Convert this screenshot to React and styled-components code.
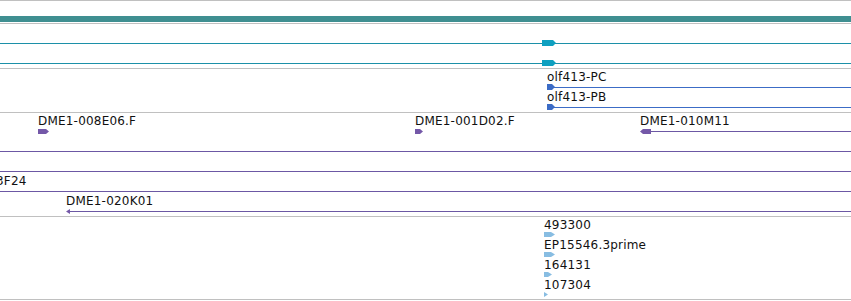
import React from "react";
import { styled, createGlobalStyle } from "styled-components";

const GlobalStyle = createGlobalStyle`
  body {
    margin: 0;
    background: #fff;
    font-family: "DejaVu Sans", "Liberation Sans", sans-serif;
    overflow: hidden;
  }
`;

const Browser = styled.div`
  display: flex;
  flex-direction: column;
  width: 851px;
  border-top: 1px solid #c0c0c0;
  overflow: hidden;
`;

const Track = styled.div`
  display: flex;
  flex-direction: column;
  padding: ${(p) => p.$pad || "0 0 3px"};
  border-bottom: 1px solid #c0c0c0;
`;

const Bar = styled.div`
  height: 6px;
  background: #3f8f91;
`;

const Row = styled.div`
  position: relative;
  height: 20px;
`;

// connector line of a feature, runs to the right edge of the view
const Span = styled.div`
  position: absolute;
  top: 18px;
  right: 0;
  height: 1px;
  background: ${(p) => p.$color};
`;

// a feature sits at its genomic x, label stacked over its glyph
const Feature = styled.div`
  position: absolute;
  top: 0;
  display: flex;
  flex-direction: column;
  align-items: flex-start;
  gap: ${(p) => p.$gap ?? 1}px;
  padding-top: ${(p) => p.$pt || 0}px;
`;

const Label = styled.span`
  font-size: 12px;
  line-height: 14px;
  letter-spacing: 0.2px;
  color: #111;
  white-space: nowrap;
`;

const Svg = styled.svg`
  display: block;
`;

// arrow glyph: a box with a pointed end, facing right or left
function Glyph({ w, h = 6, tip = 3, left, color }) {
  const pts = left
    ? `0,${h / 2} ${tip},0 ${w},0 ${w},${h} ${tip},${h}`
    : `0,0 ${w - tip},0 ${w},${h / 2} ${w - tip},${h} 0,${h}`;
  return (
    <Svg width={w} height={h} viewBox={`0 0 ${w} ${h}`}>
      <polygon points={pts} fill={color} />
    </Svg>
  );
}

const TEAL = "#1c90a8";
const TEAL_G = "#0fa0c0";
const BLUE = "#3c6cc6";
const PURPLE = "#6c58a4";
const PURPLE_G = "#7458a8";
const SKY = "#88bde2";

const clones = [
  [
    { name: "DME1-008E06.F", x: 38, w: 11 },
    { name: "DME1-001D02.F", x: 415, w: 8 },
    { name: "DME1-010M11", x: 640, w: 11, left: true, line: 648 },
  ],
  [{ line: 0 }],
  [{ line: 0 }],
  [{ name: "3F24", x: -4, line: 0 }],
  [{ name: "DME1-020K01", x: 66, w: 4, tip: 4, left: true, line: 68 }],
];

const ests = [
  ["493300", 11],
  ["EP15546.3prime", 11],
  ["164131", 8],
  ["107304", 4],
];

export default function App() {
  return (
    <>
      <GlobalStyle />
      <Browser>
        <Track $pad="15px 0 1px">
          <Bar />
        </Track>

        <Track $pad="1px 0 3px">
          {[0, 1].map((i) => (
            <Row key={i}>
              <Span $color={TEAL} style={{ left: 0 }} />
              <Feature $pt={15} style={{ left: 542 }}>
                <Glyph w={14} color={TEAL_G} />
              </Feature>
            </Row>
          ))}
        </Track>

        <Track>
          {["olf413-PC", "olf413-PB"].map((name) => (
            <Row key={name}>
              <Span $color={BLUE} style={{ left: 547 }} />
              <Feature $pt={1} $gap={0} style={{ left: 547 }}>
                <Label>{name}</Label>
                <Glyph w={8} color={BLUE} />
              </Feature>
            </Row>
          ))}
        </Track>

        <Track>
          {clones.map((row, i) => (
            <Row key={i}>
              {row.map((f, j) =>
                <React.Fragment key={j}>
                  {f.line !== undefined && <Span $color={PURPLE} style={{ left: f.line }} />}
                  {f.name && (
                    <Feature $pt={1} $gap={1} style={{ left: f.x }}>
                      <Label>{f.name}</Label>
                      {f.w && <Glyph w={f.w} h={5} tip={f.tip || 3} left={f.left} color={PURPLE_G} />}
                    </Feature>
                  )}
                </React.Fragment>
              )}
            </Row>
          ))}
        </Track>

        <Track $pad="1px 0 1px">
          {ests.map(([name, w]) => (
            <Row key={name}>
              <Feature $gap={0} style={{ left: 544 }}>
                <Label>{name}</Label>
                <Glyph w={w} h={5} tip={Math.min(4, w)} color={SKY} />
              </Feature>
            </Row>
          ))}
        </Track>
      </Browser>
    </>
  );
}
